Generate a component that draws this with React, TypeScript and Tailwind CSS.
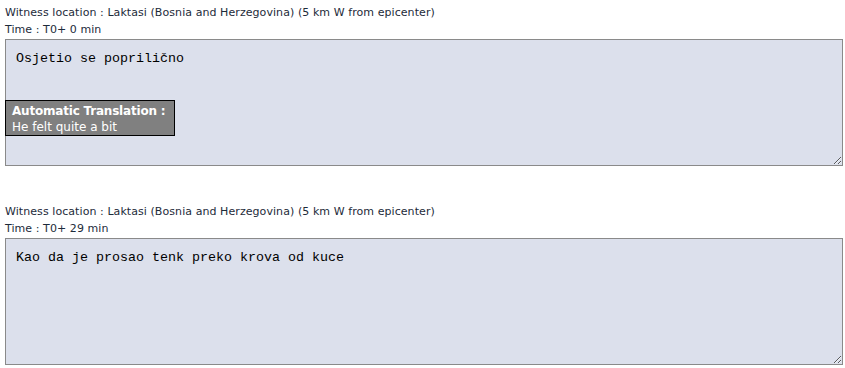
import React from "react";

const verdana = { fontFamily: '"DejaVu Sans", Verdana, sans-serif' };

function Entry({ time, text, translation }: { time: string; text: string; translation?: string }) {
  return (
    <div className="flex flex-col">
      <div className="text-[11px] leading-[17px] text-[#1d2b3a] pl-[5px] pt-[4px] tracking-[0.07px]" style={verdana}>
        <div>Witness location : Laktasi (Bosnia and Herzegovina) (5 km W from epicenter)</div>
        <div>Time : {time}</div>
      </div>
      <div className="relative mt-[1px] ml-[5px] w-[838px] h-[127px]">
        <textarea
          readOnly
          value={text}
          className="block w-full h-full bg-[#dce0ec] border border-[#8a8a8a] pt-[11px] px-[10px] text-[13.33px] leading-[16px] text-black outline-none"
          style={{ fontFamily: '"Liberation Mono", "Courier New", monospace' }}
        />
        {translation && (
          <div
            className="absolute left-0 top-[61px] w-[170px] h-[36px] bg-[#808080] border border-black pl-[6px] pt-[2px] text-white text-[12px] leading-[16px] whitespace-nowrap overflow-hidden"
            style={verdana}
          >
            <div className="font-bold tracking-[-0.2px]">Automatic Translation :</div>
            <div>{translation}</div>
          </div>
        )}
      </div>
    </div>
  );
}

export default function App() {
  return (
    <div className="w-[845px] h-[368px] bg-white overflow-hidden">
      <Entry time="T0+ 0 min" text="Osjetio se poprilično" translation="He felt quite a bit" />
      <div className="h-[33px]" />
      <Entry time="T0+ 29 min" text="Kao da je prosao tenk preko krova od kuce" />
    </div>
  );
}
